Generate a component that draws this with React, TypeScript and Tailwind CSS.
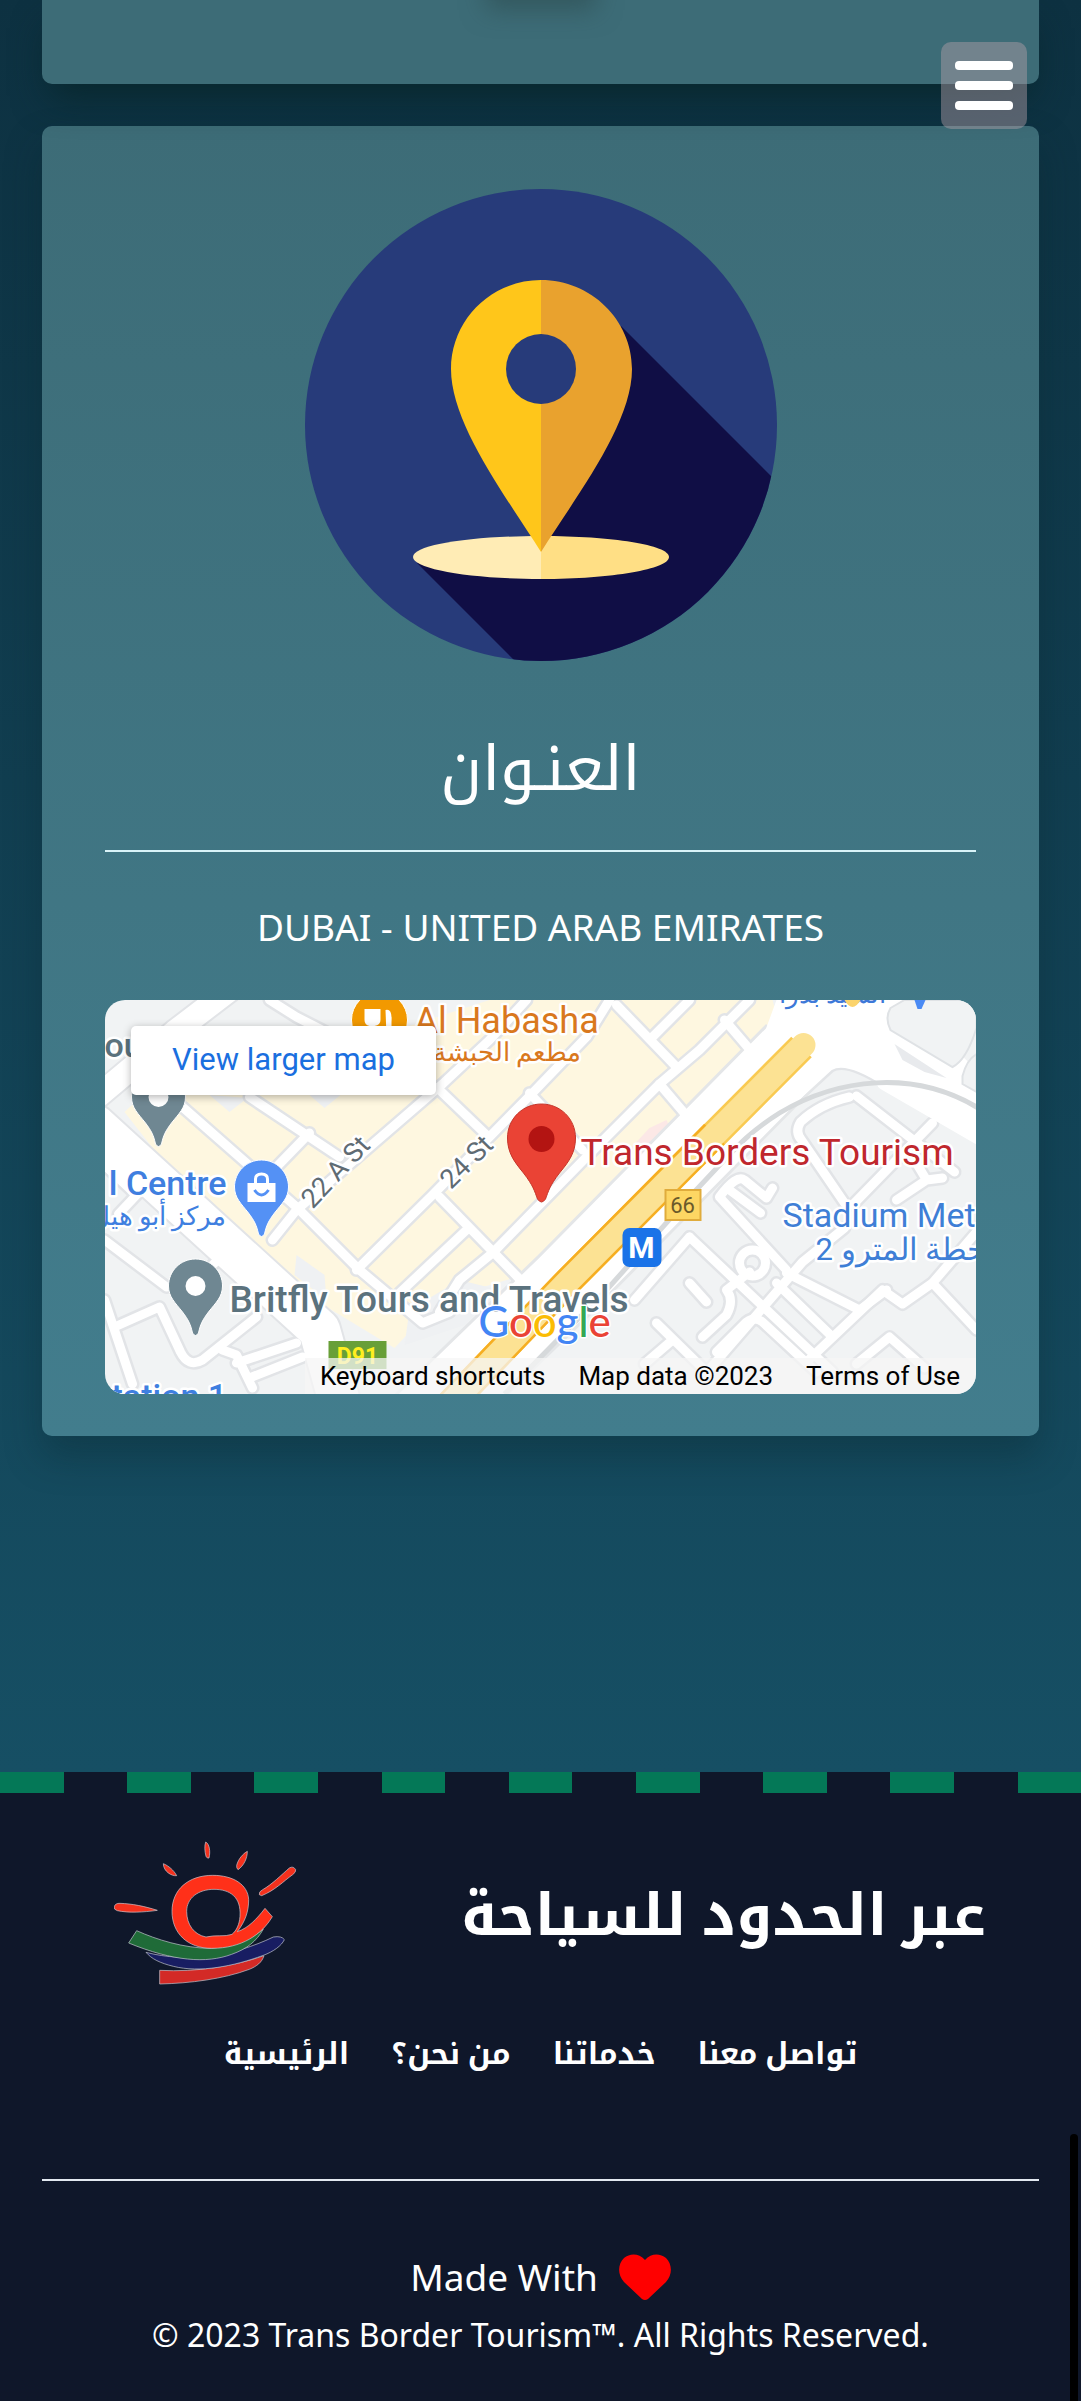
import type { ReactNode } from "react";

const minorRoads = [
  "M78 107L192 207L255 270L318 323L345 312",
  "M145 97L235 157",
  "M165 0L192 17L335 90L382 135",
  "M422 0L385 40L338 84L192 210L168 240",
  "M205 133L172 167",
  "M505 0L482 37L428 93L328 195L252 270",
  "M425 93L478 150",
  "M335 197L418 282",
  "M645 0L595 50L555 84L482 157L388 253L355 280L335 312",
  "M362 230L295 293",
  "M512 5L572 67",
  "M555 84L584 118",
  "M548 37L585 0",
  "M620 20L650 55",
  "M0 240L62 287",
  "M130 245L108 265",
  "M10 327L55 307L76 352Q84 368 98 360L152 317",
  "M0 300L28 384",
  "M118 350L132 355L148 388",
  "M132 363L192 343",
  "M145 378L198 357",
  "M0 165L32 195L14 214",
  "M590 190L725 66Q742 56 782 82",
  "M752 96L850 172",
  "M745 97Q715 104 696 122Q690 132 697 140L740 203",
  "M828 123L748 205",
  "M810 160L822 180L838 178M822 180L792 200",
  "M615 197L682 270M615 197Q632 174 640 180L662 198L668 188",
  "M625 190L656 213",
  "M585 237L728 372",
  "M585 237L530 300",
  "M682 273L755 310L782 290",
  "M672 283L728 337",
  "M600 375L698 262L740 228",
  "M702 362L778 290L798 304L828 283L872 232",
  "M828 283L872 330",
  "M598 337L622 315Q630 300 622 290L645 272",
  "M612 352L642 322Q650 316 658 322L712 372",
  "M752 364L785 337L820 368",
  "M585 283L602 302",
  "M552 323L600 370M568 340L540 364",
];

function Halo({ children, ...p }: { children: ReactNode } & React.SVGProps<SVGTextElement>) {
  return (
    <text
      stroke="#fff"
      strokeWidth={5}
      strokeLinejoin="round"
      paintOrder="stroke"
      fontFamily='Roboto, "Noto Sans", sans-serif'
      {...p}
    >
      {children}
    </text>
  );
}

function Pin({ x, y, fill, children }: { x: number; y: number; fill: string; children?: ReactNode }) {
  return (
    <g transform={`translate(${x} ${y})`}>
      <path
        d="M0-27C-15-27-27-15-27 0C-27 11-20 17-13 26C-7 34-5 38-3 47Q0 52 3 47C5 38 7 34 13 26C20 17 27 11 27 0C27-15 15-27 0-27Z"
        fill={fill}
        stroke="#fff"
        strokeWidth={1}
      />
      {children ?? <circle r={10} fill="#fff" />}
    </g>
  );
}

function MapArt() {
  return (
    <svg
      className="block h-full w-full"
      viewBox="0 0 872 394"
      preserveAspectRatio="xMidYMid slice"
      role="img"
      aria-label="Map of Trans Borders Tourism, Dubai"
    >
      <rect width={872} height={394} fill="#f1f3f4" />
      <path
        d="M20 112L60 75L200 60L385 0H668L672 15L648 55L508 190L412 277L335 300L290 348L128 250Z"
        fill="#fef7e0"
      />
      <path d="M192 255L220 275L222 300L190 275ZM305 310L355 280L395 290L360 325L300 345Z" fill="#eff1f3" />
      <path d="M105 95L125 112L143 98ZM205 95L220 108L236 95Z" fill="#eff1f3" />
      <path d="M545 128L562 120L570 138L552 152L520 155Z" fill="#fce8e6" />
      <g fill="none" strokeLinejoin="round" strokeLinecap="round">
        <g stroke="#e2e4e7" strokeWidth={14}>
          {minorRoads.map((d) => (
            <path key={d} d={d} />
          ))}
          <circle cx={648} cy={263} r={13} />
        </g>
        <path d="M-10 125L215 330L240 420" stroke="#e2e4e7" strokeWidth={45} />
        <path d="M125-10L70 32L-5 95" stroke="#e2e4e7" strokeWidth={27} />
        <path d="M300 440L460 285L690 52" stroke="#e4e6e8" strokeWidth={80} strokeLinecap="butt" />
        <g stroke="#fff" strokeWidth={9}>
          {minorRoads.map((d) => (
            <path key={d} d={d} />
          ))}
          <circle cx={648} cy={263} r={13} />
        </g>
        <path d="M-10 125L215 330L240 420" stroke="#fff" strokeWidth={41} />
        <path d="M125-10L70 32L-5 95" stroke="#fff" strokeWidth={23} />
        <path d="M300 440L460 285L700 42" stroke="#fff" strokeWidth={74} strokeLinecap="butt" />
        <path d="M780 82L880 140" stroke="#fff" strokeWidth={16} />
      </g>
      <path d="M672 0H800L872 70V134L785 84L735 62L700 80L650 60Z" fill="#fff" />
      <path
        d="M786 8L800 0H872V28Q862 60 848 67L786 30Q780 18 786 8ZM858 76Q862 60 872 54V92L858 84Z"
        fill="#f1f3f4"
        stroke="#dfe2e5"
        strokeWidth={2}
      />
      <path d="M790 44L842 78L820 72L798 60Z" fill="#e8eaed" />
      <path
        d="M400 394L502 290L585 197C630 150 640 135 675 113C730 80 810 66 880 112"
        fill="none"
        stroke="#d6d9db"
        strokeWidth={5}
      />
      <path d="M340 410L460 285L697 47" fill="none" stroke="#f9ca52" strokeWidth={29} />
      <path d="M340 410L460 285L610 134" fill="none" stroke="#f6ae22" strokeWidth={29} />
      <path d="M340 410L460 285L699 45" fill="none" stroke="#fce293" strokeWidth={24} strokeLinecap="round" />

      <circle cx={275} cy={20} r={28} fill="#f29900" stroke="#fff" />
      <path d="M260 9V20Q260 25 265 26V36H270V26Q276 25 276 20V9M281 10Q288 8 287 22V36H282Z" fill="#fff" />
      <Halo x={310} y={33} fontSize={36} fill="#d9781e">Al Habasha</Halo>
      <Halo x={477} y={61} fontSize={26} fill="#d9781e" direction="rtl">مطعم الحبشة</Halo>
      <Halo x={0} y={57} fontSize={34} fontWeight={500} fill="#5b727d">our</Halo>
      <Halo x={782} y={3} fontSize={26} fill="#3d78d8" direction="rtl">السيد بدرا</Halo>
      <path d="M740 0Q748 14 756 0Z" fill="#fbd36b" />
      <path d="M810 0H821L817 9H813Z" fill="#4a8af4" />

      <Halo transform="translate(231 172) rotate(-47)" y={9} fontSize={27} textAnchor="middle" fill="#5f6b73">
        22 A St
      </Halo>
      <Halo transform="translate(362 162) rotate(-45)" y={9} fontSize={27} textAnchor="middle" fill="#5f6b73">
        24 St
      </Halo>

      <Pin x={54} y={97} fill="#6f8792" />
      <Pin x={157} y={187} fill="#5491f5">
        <path d="M-14-4H14V15H-14Z" fill="#fff" />
        <path d="M-6-4V-8Q-6-13 0-13Q6-13 6-8V-4" fill="none" stroke="#fff" strokeWidth={3} />
        <path d="M-7 3Q0 13 7 3" fill="none" stroke="#5491f5" strokeWidth={3} />
      </Pin>
      <Halo x={122} y={195} fontSize={34} fontWeight={500} textAnchor="end" fill="#3f7fe0">l Centre</Halo>
      <Halo x={122} y={225} fontSize={26} direction="rtl" fill="#3f7fe0">مركز أبو هيل</Halo>

      <Pin x={91} y={286} fill="#6f8792" />
      <Halo x={125} y={312} fontSize={37} fontWeight={500} fill="#5b727d">Britfly Tours and Travels</Halo>

      <rect x={224} y={341} width={58} height={28} fill="#689f38" />
      <text x={253} y={364} fontSize={23} fontWeight={700} textAnchor="middle" fill="#ffee20" fontFamily="Roboto">
        D91
      </text>
      <Halo x={7} y={408} fontSize={34} fontWeight={500} fill="#3f7fe0">tation 1</Halo>

      <rect x={561} y={190} width={35} height={30} fill="#fdd663" stroke="#e0ac3c" strokeWidth={2} />
      <text x={578} y={213} fontSize={22} textAnchor="middle" fill="#6b5a2a" fontFamily="Roboto">66</text>
      <rect x={518} y={228} width={39} height={39} rx={7} fill="#1a73e8" />
      <text x={537} y={258} fontSize={30} fontWeight={700} textAnchor="middle" fill="#fff" fontFamily="Roboto">
        M
      </text>
      <Halo x={678} y={227} fontSize={34} fill="#3f7fd6">Stadium Met</Halo>
      <Halo x={711} y={260} fontSize={31} direction="rtl" textAnchor="end" fill="#3f7fd6">محطة المترو 2</Halo>

      <path
        d="M437 104C418 104 403 119 403 138C403 153 410 162 419 173C429 186 430 191 433 199Q437 205 441 199C444 191 445 186 455 173C464 162 471 153 471 138C471 119 456 104 437 104Z"
        fill="#ea4335"
        stroke="#c5352a"
        strokeWidth={1}
      />
      <circle cx={437} cy={139} r={13} fill="#b31412" />
      <Halo x={476} y={165} fontSize={37} fill="#c0272d">Trans Borders Tourism</Halo>

      <Halo x={374} y={337} fontSize={42} fontWeight={500} fontFamily="Lato, sans-serif" strokeWidth={3} fill="#4285f4">
        G<tspan fill="#ea4335">o</tspan>
        <tspan fill="#fbbc04">o</tspan>
        <tspan>g</tspan>
        <tspan fill="#34a853">l</tspan>
        <tspan fill="#ea4335">e</tspan>
      </Halo>
    </svg>
  );
}

function LocationArt() {
  return (
    <svg className="block w-[472px] max-w-full" viewBox="0 0 472 472" aria-hidden="true">
      <defs>
        <clipPath id="disc">
          <circle cx={236} cy={236} r={236} />
        </clipPath>
      </defs>
      <circle cx={236} cy={236} r={236} fill="#273b7a" />
      <g clipPath="url(#disc)">
        <path d="M316 137L480 301V480H218L112 374L236 345Z" fill="#100e45" />
      </g>
      <path d="M236 347C165 347 108 356 108 368S165 390 236 390Z" fill="#ffecb5" />
      <path d="M236 347C307 347 364 356 364 368S307 390 236 390Z" fill="#ffdf85" />
      <path d="M236 91C186 91 146 131 146 180C146 235 200 306 236 363Z" fill="#ffc61a" />
      <path d="M236 91C286 91 327 131 327 180C327 235 272 306 236 363Z" fill="#e9a22e" />
      <circle cx={236} cy={180} r={35} fill="#273b7a" />
    </svg>
  );
}

function Logo() {
  return (
    <svg className="block w-[183px] shrink-0" viewBox="42 64 549 432" role="img" aria-label="Trans Border Tourism">
      <g stroke="#c9ccd4" strokeWidth={2} strokeLinejoin="round">
        <path d="M179 452C290 458 400 440 492 408C486 428 470 440 448 449C370 478 270 491 179 493Z" fill="#d32a26" />
        <path d="M138 398C260 430 400 410 520 352Q545 348 553 360C545 378 520 396 490 407C400 440 300 460 220 440C180 430 155 418 138 398Z" fill="#181d62" />
        <path d="M110 333C170 360 250 385 330 386C400 380 450 360 490 328C470 365 440 388 395 404C320 432 220 425 86 370Z" fill="#1f6b38" />
        <path
          d="M338 167C265 167 216 210 216 275C216 340 262 386 335 386C425 386 485 345 517 291L495 266C470 298 445 325 412 336C436 305 446 275 446 240C444 195 400 167 338 167ZM342 209C390 209 424 232 420 290C418 315 410 332 396 344C375 352 345 345 318 352C282 345 260 315 260 275C260 235 295 209 342 209Z"
          fill="#ff3019"
          fillRule="evenodd"
        />
        <path d="M42 262Q46 250 60 251C95 252 135 260 172 272C130 278 85 280 52 273Q42 270 42 262Z" fill="#f5311d" />
        <path d="M190 132C205 138 222 152 230 168C215 170 190 155 190 132Z" fill="#f5311d" />
        <path d="M317 67C328 72 332 95 327 115Q321 117 318 110C314 95 313 78 317 67Z" fill="#f5311d" />
        <path d="M442 95C442 115 432 138 414 150Q409 145 410 137C415 118 428 103 442 95Z" fill="#f5311d" />
        <path d="M478 225Q476 216 488 210C515 195 545 165 568 145Q580 138 587 150Q588 158 578 165C550 185 525 212 485 228Z" fill="#f5311d" />
      </g>
    </svg>
  );
}

const links = ["الرئيسية", "من نحن؟", "خدماتنا", "تواصل معنا"];

export default function App() {
  return (
    <div className="relative flex min-h-screen flex-col overflow-hidden bg-[#0f172a] font-['Noto_Sans','Noto_Kufi_Arabic',sans-serif] text-white">
      <button
        type="button"
        aria-label="Menu"
        className="absolute top-[42px] right-[54px] z-10 flex h-[87px] w-[86px] flex-col items-center justify-center gap-[11px] rounded-[10px] bg-[#b4a0a8]/45"
      >
        <span className="h-[9px] w-[58px] rounded bg-white" />
        <span className="h-[9px] w-[58px] rounded bg-white" />
        <span className="h-[9px] w-[58px] rounded bg-white" />
      </button>

      <main className="flex flex-col gap-[42px] bg-linear-to-b from-[#0d3141] to-[#164f64] px-[42px] pb-[336px]">
        <section className="relative h-[84px] rounded-b-[10px] bg-[#3d6c77] shadow-[0_20px_36px_-8px_rgba(8,38,42,0.9)]">
          <div className="flex h-full justify-center overflow-hidden">
            <span className="-mt-5 h-5 w-[90px] shadow-[0_0_24px_10px_rgba(45,75,78,0.6)]" />
          </div>
        </section>

        <section className="flex flex-col items-center rounded-[10px] bg-linear-to-b from-[#3d6c77] to-[#427d8d] px-[63px] pt-[63px] pb-[42px] shadow-[0_20px_36px_0_rgba(8,38,42,0.35)]">
          <LocationArt />
          <h2 className="mt-[63px] text-[62px] leading-[84px] font-normal">العنـوان</h2>
          <hr className="mt-[42px] w-full border-t-2 border-[#d9f3f8]" />
          <p className="mt-[50px] text-[37px] leading-[50px]">DUBAI - UNITED ARAB EMIRATES</p>
          <div className="relative mt-[48px] h-[394px] w-full overflow-hidden rounded-[20px] font-[Roboto,sans-serif]">
            <MapArt />
            <a
              href="#map"
              className="absolute top-[26px] left-[26px] flex h-[69px] w-[305px] items-center justify-center rounded-[5px] bg-white text-[31px] text-[#1a6fdf] shadow-[0_2px_8px_rgba(0,0,0,0.3)]"
            >
              View larger map
            </a>
            <div className="absolute right-0 bottom-0 flex h-[36px] items-center gap-[33px] bg-[#f5f5f5]/75 pr-[16px] pl-[15px] text-[26px] text-black">
              <button type="button">Keyboard shortcuts</button>
              <span>Map data ©2023</span>
              <a href="#terms">Terms of Use</a>
            </div>
          </div>
        </section>
      </main>

      <footer>
        <div className="flex h-[21px]" aria-hidden="true">
          {Array.from({ length: 17 }, (_, i) => (
            <span key={i} className="flex-1 odd:bg-[#047857]" />
          ))}
        </div>
        <div className="mt-[48px] flex items-center justify-between pr-[95px] pl-[114px]">
          <Logo />
          <h1 className="text-[58px] leading-[84px] font-bold" dir="rtl">عبر الحدود للسياحة</h1>
        </div>
        <nav className="mt-[47px] flex justify-center gap-[42px] text-[30px] leading-[42px] font-bold">
          {links.map((l) => (
            <a key={l} href="#" dir="rtl">
              {l}
            </a>
          ))}
        </nav>
        <hr className="mx-[42px] mt-[105px] border-t-2 border-[#e2e8f0]" />
        <div className="mt-[69px] flex items-center justify-center gap-[21px] text-[37px] leading-[54px]">
          <span>Made With</span>
          <svg className="h-[46px] w-[52px]" viewBox="0 0 52 46" role="img" aria-label="love">
            <path
              d="M26 6C20-1 11-1 5 4C-1 10-2 20 5 28L23 45Q26 47 29 45L47 28C54 20 53 10 47 4C41-1 32-1 26 6Z"
              fill="#f00"
            />
          </svg>
        </div>
        <p className="mt-[6px] text-center text-[32px] leading-[50px]">
          © 2023 Trans Border Tourism™. All Rights Reserved.
        </p>
      </footer>
      <span className="absolute right-[3px] bottom-0 h-[267px] w-[8px] rounded-t-full bg-black" aria-hidden="true" />
    </div>
  );
}
